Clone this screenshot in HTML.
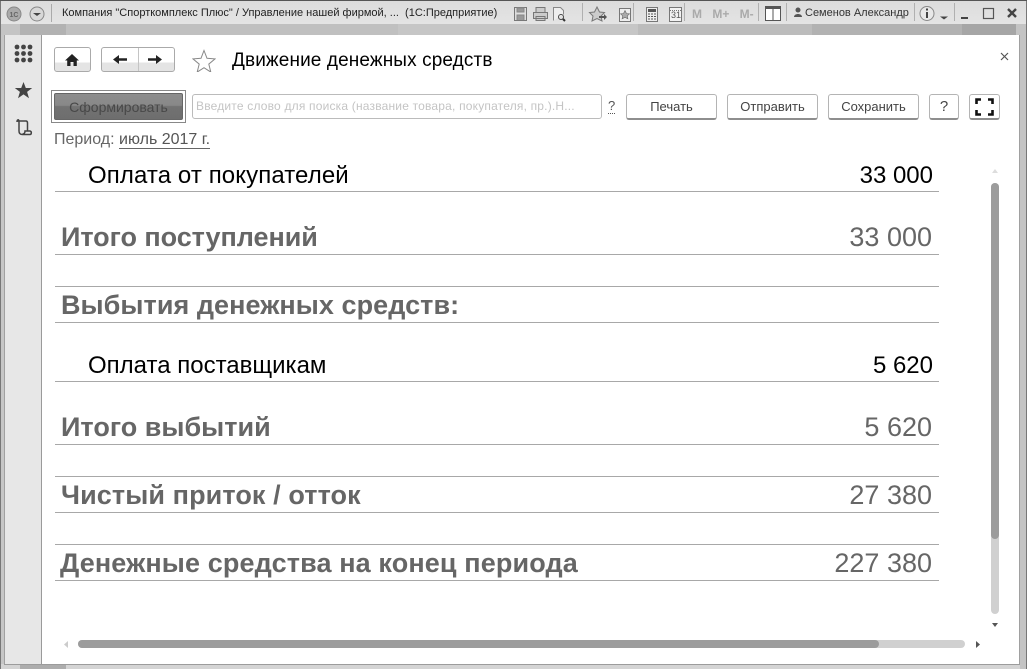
<!DOCTYPE html>
<html lang="ru"><head><meta charset="utf-8"><style>
html,body{margin:0;padding:0;background:#fff}
#w{position:relative;width:1027px;height:669px;overflow:hidden;background:#d4d4d4;font-family:"Liberation Sans",sans-serif;color:#000}
#w div,#w span.a,#w svg{position:absolute}
.t{white-space:nowrap;line-height:1}
.btn{box-sizing:border-box;background:#fff;border:1px solid #b4b4b4;border-bottom:2px solid #8e8e8e;border-radius:3px;text-align:center;font-size:13px;color:#444;line-height:23px;height:26px;top:94px}
.l{left:55px;width:884px;height:1px;background:#a8a8a8}
.h{left:61px;font-size:27px;font-weight:bold;color:#666;white-space:nowrap;line-height:1}
.n{right:95px;font-size:27px;color:#666;white-space:nowrap;line-height:1}
.r{font-size:24px;white-space:nowrap;line-height:1;color:#000}
.sep{width:1px;height:18px;top:3px;background:#b0b0b0}
</style></head><body><div id="w">
<div style="left:0;top:0;width:1027px;height:1px;background:#555"></div>
<div style="left:0;top:1px;width:1027px;height:23px;background:linear-gradient(#dcdcdc,#e4e4e4)"></div>
<div style="left:0;top:1px;width:1px;height:668px;background:#777"></div>
<div style="left:1026px;top:1px;width:1px;height:668px;background:#777"></div>
<div style="left:1px;top:24px;width:19px;height:11px;background:#c4c4c4"></div>
<div style="left:20px;top:24px;width:46px;height:11px;background:#b2b2b2"></div>
<div style="left:66px;top:24px;width:332px;height:11px;background:#c0c0c0"></div>
<div style="left:398px;top:24px;width:240px;height:11px;background:#c6c6c6"></div>
<div style="left:638px;top:24px;width:174px;height:11px;background:#bcbcbc"></div>
<div style="left:812px;top:24px;width:150px;height:11px;background:#b2b2b2"></div>
<div style="left:962px;top:24px;width:54px;height:11px;background:#a6a6a6"></div>
<div style="left:1016px;top:24px;width:10px;height:11px;background:#c4c4c4"></div>

<svg style="left:6px;top:3px" width="42" height="20" viewBox="0 0 42 20"><circle cx="8" cy="11" r="7" fill="#aaa" stroke="#888"/><text x="3.500" y="14" font-size="7" font-weight="bold" font-family="Liberation Sans" fill="#666">1С</text><circle cx="31" cy="11" r="7" fill="#d8d8d8" stroke="#888"/><path d="M27 10l4 3 4-3z" fill="#444"/></svg>
<div style="left:51px;top:4px;width:1px;height:18px;background:#aaa"></div>
<div class="t" style="left:62px;top:8px;font-size:11px;color:#222">Компания "Спорткомплекс Плюс" / Управление нашей фирмой, ...&nbsp; (1С:Предприятие)</div>

<svg style="left:512px;top:3px" width="258" height="20" viewBox="0 0 258 20" fill="none" stroke="#777">
<rect x="2.500" y="4.500" width="12" height="13" fill="#ddd"/><path d="M5 5h7v4H5zM5 17v-5h7v5" fill="#999" stroke="#888"/>
<path d="M24 9V4.500h9V9M21.500 9.500h14v6h-14zM24 13.500h9v4h-9z" fill="#ccc"/>
<path d="M41.500 17.500v-13h7l3 3v4" fill="#eee" stroke="#888"/><circle cx="49" cy="14" r="2.500" stroke="#444"/><path d="M51 16l2 2" stroke="#333" stroke-width="2"/>
<path d="M85 4l2.500 5 5 .5-3.500 3.500 1 5-5-2.500-5 2.500 1-5-3.500-3.500 5-.5z" fill="#ccc"/><path d="M87 13h5v-2l3 3-3 3v-2h-5z" fill="#555" stroke="none"/>
<rect x="107.500" y="5.500" width="11" height="13" fill="#eee"/><path d="M113 7.500l1.500 3 3 .3-2.200 2 .6 3-2.900-1.500-2.900 1.500.6-3-2.200-2 3-.3z" fill="#aaa" stroke="#666" stroke-width=".6"/>
<rect x="134.500" y="4.500" width="11" height="14" fill="#eee"/><path d="M136 6h8v3h-8z" fill="#555" stroke="none"/><path d="M136 11h8M136 13.500h8M136 16h8" stroke="#555" stroke-dasharray="2 1"/>
<rect x="157.500" y="4.500" width="12" height="14" fill="#f2f2f2"/><path d="M158 7.500h11" stroke="#777" stroke-dasharray="1 1"/></svg>
<div class="t" style="left:671px;top:11px;font-size:9px;color:#555">31</div>
<div class="sep" style="left:582px"></div><div class="sep" style="left:633px"></div><div class="sep" style="left:684px"></div><div class="sep" style="left:758px"></div><div class="sep" style="left:786px"></div><div class="sep" style="left:914px"></div><div class="sep" style="left:954px"></div>
<div class="t" style="left:692px;top:8px;font-size:12px;font-weight:bold;color:#aaa;word-spacing:7px">M M+ M-</div>
<svg style="left:765px;top:5px" width="18" height="17"><rect x=".5" y="1.500" width="15" height="14" fill="#fff" stroke="#555"/><path d="M8 2v13" stroke="#555"/><path d="M1 2h14v2H1z" fill="#555"/></svg>
<svg style="left:793px;top:7px" width="10" height="11"><circle cx="5" cy="3" r="2.500" fill="#555"/><path d="M1 10c0-4 8-4 8 0z" fill="#555"/></svg>
<div class="t" style="left:805px;top:8px;font-size:11px;color:#333">Семенов Александр</div>
<svg style="left:917px;top:3px" width="100" height="20" fill="none"><circle cx="10" cy="10.500" r="7" fill="#e8e8e8" stroke="#888"/><path d="M10 9v6" stroke="#444" stroke-width="2"/><path d="M10 5.500v2" stroke="#444" stroke-width="2"/><path d="M23 13.500h8l-4 3z" fill="#444"/>
<path d="M44 15h7" stroke="#444" stroke-width="2"/><rect x="66.500" y="5.500" width="10" height="10" stroke="#555" stroke-width="1.200"/><path d="M91 6l8 8M99 6l-8 8" stroke="#444" stroke-width="2.400"/></svg>

<div style="left:5px;top:35px;width:36px;height:629px;background:#e7e7e7"></div>
<div style="left:41px;top:35px;width:1px;height:629px;background:#9a9a9a"></div>
<div style="left:42px;top:35px;width:977px;height:629px;background:#fff"></div>
<div style="left:1px;top:35px;width:4px;height:629px;background:#c6c6c6"></div>
<div style="left:4px;top:35px;width:1px;height:630px;background:#a0a0a0"></div>
<div style="left:1019px;top:35px;width:1px;height:630px;background:#a0a0a0"></div>
<div style="left:1020px;top:35px;width:6px;height:634px;background:#c4c4c4"></div>
<div style="left:4px;top:664px;width:1016px;height:1px;background:#9c9c9c"></div>
<div style="left:20px;top:665px;width:46px;height:4px;background:#adadad"></div>

<svg style="left:14px;top:44px" width="20" height="95">
<g fill="#444"><circle cx="3" cy="3" r="2.400"/><circle cx="9.500" cy="3" r="2.400"/><circle cx="16" cy="3" r="2.400"/><circle cx="3" cy="9.500" r="2.400"/><circle cx="9.500" cy="9.500" r="2.400"/><circle cx="16" cy="9.500" r="2.400"/><circle cx="3" cy="16" r="2.400"/><circle cx="9.500" cy="16" r="2.400"/><circle cx="16" cy="16" r="2.400"/>
<path d="M9.500 38l2.300 6h6.400l-5.100 3.900 1.900 6.300-5.500-3.800-5.500 3.800 1.900-6.300L.8 44h6.400z"/></g>
<path d="M3 78c0-3 2-2.500 2 -1v10c0 3 2 3.500 3.500 3.500H16c1.500 0 2-3 0-3.500h-5c0 2-1 3-2.500 3M3 77h9c1 0 1.500 1 1.500 2v8" fill="none" stroke="#444" stroke-width="1.500"/></svg>

<div style="left:54px;top:47px;box-sizing:border-box;width:37px;height:25px;border:1px solid #aaa;border-radius:3px;background:linear-gradient(#fff 0,#fff 62%,#e4e4e4 62%)"></div>
<svg style="left:65px;top:54px" width="14" height="12"><path d="M7 0L0 6.500h2.200V12h3.300V8h3v4h3.300V6.500H14z" fill="#222"/></svg>
<div style="left:101px;top:47px;box-sizing:border-box;width:74px;height:25px;border:1px solid #aaa;border-radius:3px;background:linear-gradient(#fff 0,#fff 62%,#e4e4e4 62%)"></div>
<div style="left:138px;top:48px;width:1px;height:23px;background:#c4c4c4"></div>
<svg style="left:113px;top:54px" width="50" height="11" fill="#222"><path d="M0 5.500L6 1v3.300h8v2.400H6V10z"/><path d="M49 5.500L43 1v3.300h-8v2.400h8V10z"/></svg>
<svg style="left:192px;top:49px" width="24" height="23"><path d="M12 1.500l3 7.800 8 .6-6.200 5.200 2 8-6.800-4.400-6.800 4.400 2-8L1 9.900l8-.6z" fill="#fff" stroke="#888" stroke-width="1"/></svg>
<div class="t" style="left:232px;top:51px;font-size:19px;letter-spacing:.12px">Движение денежных средств</div>
<svg style="left:1000px;top:52px" width="9" height="9"><path d="M1 1l7 7M8 1l-7 7" stroke="#555" stroke-width="1.200"/></svg>

<div style="left:51px;top:90px;box-sizing:border-box;width:135px;height:33px;border:1px solid #888"></div>
<div style="left:54px;top:93px;box-sizing:border-box;width:129px;height:27px;border:1px solid #666;border-radius:2px;background:linear-gradient(#8e8e8e,#888 45%,#727272 50%,#6e6e6e);text-align:center;font-size:14px;line-height:26px;color:#484848">Сформировать</div>
<div style="left:192px;top:94px;box-sizing:border-box;width:410px;height:25px;border:1px solid #bbb;border-radius:3px;background:#fff;font-size:12px;line-height:23px;color:#c4c4c4;padding-left:3px;white-space:nowrap;letter-spacing:.19px">Введите слово для поиска (название товара, покупателя, пр.).Н...</div>
<div class="t" style="left:608px;top:99px;font-size:13px;color:#555;border-bottom:1px dotted #555;padding-bottom:1px">?</div>
<div class="btn" style="left:626px;width:91px">Печать</div>
<div class="btn" style="left:727px;width:91px">Отправить</div>
<div class="btn" style="left:828px;width:91px">Сохранить</div>
<div class="btn" style="left:929px;width:30px;font-size:15px">?</div>
<div class="btn" style="left:969px;width:31px"></div>
<svg style="left:975px;top:98px" width="19" height="18"><path d="M1.500 6V1.500H6M13 1.500h4.500V6M1.500 12v4.500H6M13 16.500h4.500V12" fill="none" stroke="#111" stroke-width="2.600"/></svg>

<div class="t" style="left:54px;top:132px;font-size:16px;color:#666">Период: <span style="color:#555;border-bottom:1px solid #666">июль 2017 г.</span></div>

<div class="r" style="left:88px;top:164px;letter-spacing:.1px">Оплата от покупателей</div>
<div class="r" style="right:94px;top:164px">33 000</div>
<div class="l" style="top:191px"></div>
<div class="h" style="top:224px;letter-spacing:-.05px">Итого поступлений</div>
<div class="n" style="top:224px">33 000</div>
<div class="l" style="top:254px"></div>
<div class="l" style="top:286px"></div>
<div class="h" style="top:292px;letter-spacing:.06px">Выбытия денежных средств:</div>
<div class="l" style="top:322px"></div>
<div class="r" style="left:88px;top:354px">Оплата поставщикам</div>
<div class="r" style="right:94px;top:354px">5 620</div>
<div class="l" style="top:381px"></div>
<div class="h" style="top:414px;letter-spacing:.02px">Итого выбытий</div>
<div class="n" style="top:414px">5 620</div>
<div class="l" style="top:444px"></div>
<div class="l" style="top:476px"></div>
<div class="h" style="top:482px;letter-spacing:.1px">Чистый приток / отток</div>
<div class="n" style="top:482px">27 380</div>
<div class="l" style="top:512px"></div>
<div class="l" style="top:544px"></div>
<div class="h" style="top:550px;left:60px;letter-spacing:.13px">Денежные средства на конец периода</div>
<div class="n" style="top:550px">227 380</div>
<div class="l" style="top:580px"></div>

<div style="left:991px;top:183px;width:8px;height:431px;border-radius:4px;background:#d0d0d0"></div>
<div style="left:991px;top:183px;width:8px;height:356px;border-radius:4px;background:#9c9c9c"></div>
<svg style="left:992px;top:168px" width="6" height="6"><path d="M3 1l3 4H0z" fill="#ddd"/></svg>
<svg style="left:992px;top:622px" width="6" height="6"><path d="M3 5L0 1h6z" fill="#555"/></svg>
<div style="left:78px;top:640px;width:887px;height:8px;border-radius:4px;background:#d0d0d0"></div>
<div style="left:78px;top:640px;width:801px;height:8px;border-radius:4px;background:#9c9c9c"></div>
<svg style="left:63px;top:641px" width="6" height="7"><path d="M1 3.500L5 0v7z" fill="#ccc"/></svg>
<svg style="left:975px;top:641px" width="6" height="7"><path d="M5 3.500L1 0v7z" fill="#555"/></svg>
</div></body></html>
